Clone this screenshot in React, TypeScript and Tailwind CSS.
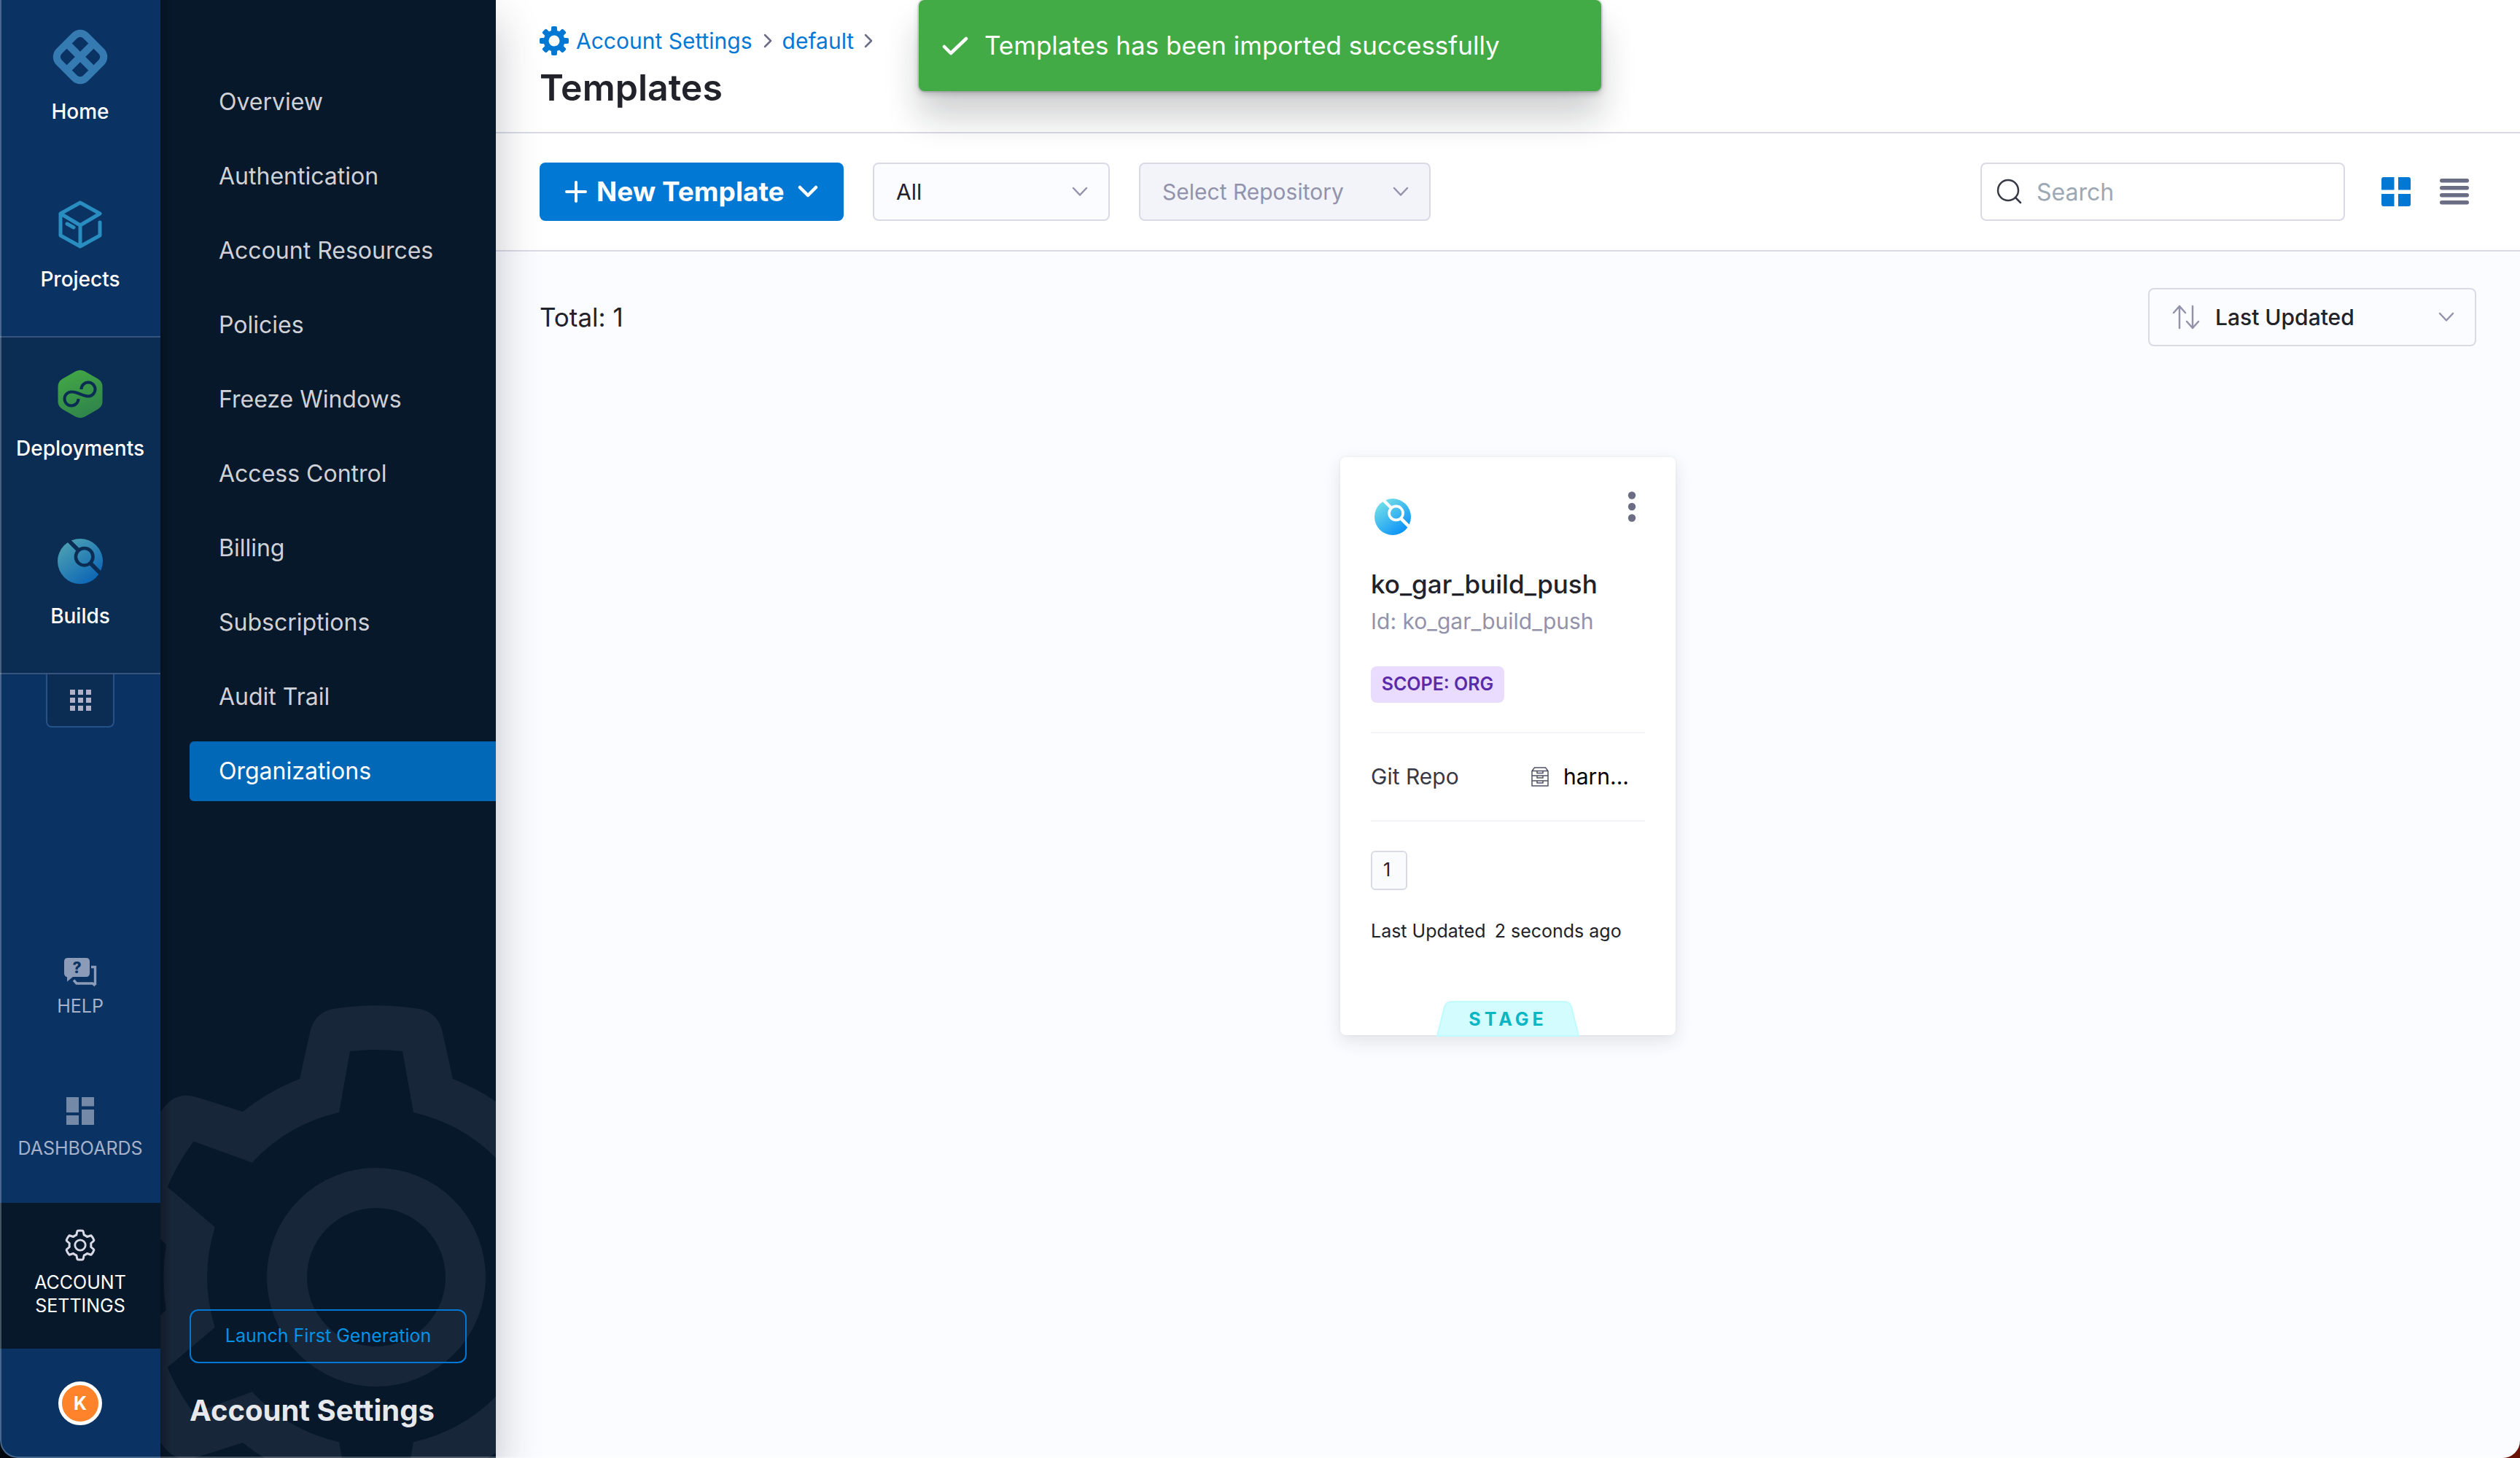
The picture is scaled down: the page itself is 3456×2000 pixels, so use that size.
import { useId } from "react";
import type { ReactNode } from "react";

type Pt = [number, number];

const rotate = ([x, y]: Pt, deg: number): Pt => {
  const a = (deg * Math.PI) / 180;
  return [x * Math.cos(a) - y * Math.sin(a), x * Math.sin(a) + y * Math.cos(a)];
};
const fmt = ([x, y]: Pt) => `${x.toFixed(1)} ${y.toFixed(1)}`;

/** Closed outline of a six-toothed gear, centred on the origin. */
function gearOutline(base: Pt, tip: Pt, round: number): string {
  const bodyR = Math.hypot(base[0], base[1]);
  const tipR = Math.hypot(tip[0], tip[1]);
  let d = "";
  for (let k = 0; k < 6; k++) {
    const r = (p: Pt) => fmt(rotate(p, k * 60));
    const [bx, by] = base;
    const [tx, ty] = tip;
    const sx = tx + (bx - tx) * round * 0.4;
    const sy = ty + (by - ty) * round * 0.4;
    const inner = tx * (1 - round * 0.4);
    const innerY = -Math.sqrt(tipR * tipR - inner * inner);
    d += k === 0 ? `M${r([-bx, by])}` : `A${bodyR} ${bodyR} 0 0 1 ${r([-bx, by])}`;
    d += `L${r([-sx, sy])}Q${r([-tx, ty])} ${r([-inner, innerY])}`;
    d += `A${tipR} ${tipR} 0 0 1 ${r([inner, innerY])}`;
    d += `Q${r([tx, ty])} ${r([sx, sy])}L${r([bx, by])}`;
  }
  return d + `A${bodyR} ${bodyR} 0 0 1 ${fmt([-base[0], base[1]])}Z`;
}

function BigGear() {
  const d = gearOutline([105, -272], [85, -363], 0.75) + gearOutline([51, -226], [36, -310], 0);
  return (
    <svg aria-hidden="true" viewBox="-380 -380 760 760" className="pointer-events-none absolute -bottom-[132px] -left-[84px] h-[760px] w-[760px] max-w-none">
      <path d={d} fill="#182639" fillRule="evenodd" />
      <circle r="122.5" fill="none" stroke="#182639" strokeWidth="55" />
    </svg>
  );
}

function SettingsGear() {
  return (
    <svg viewBox="-22 -22 44 44" className="h-11 w-11">
      <path d={gearOutline([5.2, -14], [4, -19.6], 0.4)} fill="none" stroke="#d9dae5" strokeWidth="3" strokeLinejoin="round" />
      <circle r="7.2" fill="none" stroke="#d9dae5" strokeWidth="2.8" />
    </svg>
  );
}

function Cog() {
  return (
    <svg viewBox="-20 -20 40 40" className="h-10 w-10" fill="#0278d5">
      {[0, 45, 90, 135].map((a) => (
        <rect key={a} x="-4" y="-20" width="8" height="40" rx="2" transform={`rotate(${a})`} />
      ))}
      <circle r="14.5" />
      <circle r="7.5" fill="#fff" />
    </svg>
  );
}

function HomeLogo() {
  return (
    <svg viewBox="-40 -40 80 80" className="h-20 w-20" fill="none" stroke="#357bb1" strokeWidth="10">
      <g transform="rotate(45)">
        <rect x="-26" y="-26" width="52" height="52" rx="11" />
        <path d="M0-26V26M-26 0H26" />
      </g>
    </svg>
  );
}

function Cube() {
  return (
    <svg viewBox="0 0 60 66" className="h-[66px] w-[60px]" fill="none" stroke="#2a8dbf" strokeWidth="5" strokeLinejoin="round" strokeLinecap="round">
      <path d="M57 30V48L30 63 3 48V18L30 3 57 18 30 34V63M3 18 30 34M12 32 21 37" />
    </svg>
  );
}

function DeploymentsIcon() {
  const id = useId();
  return (
    <svg viewBox="20 17 62 67" className="h-[67px] w-[62px]">
      <linearGradient id={id} x1="0.3" y1="0" x2="0.7" y2="1">
        <stop offset="0" stopColor="#42a646" />
        <stop offset="1" stopColor="#2f834b" />
      </linearGradient>
      <path d="M44.500 19.500Q51 16 57.500 19.500L75 29.500Q81.500 33.500 81.500 40V61Q81.500 67.500 75 71.500L57.500 81.500Q51 85 44.500 81.500L27 71.500Q20.500 67.500 20.500 61V40Q20.500 33.500 27 29.500Z" fill={`url(#${id})`} />
      <path d="M52.500 44A9.500 9.500 0 1 1 62 53.500C54 53.500 48 47.500 39.500 47.500A9.500 9.500 0 1 0 48.500 57" fill="none" stroke="#0b2c53" strokeWidth="4" />
    </svg>
  );
}

function BuildsIcon({ className, from, to, line }: { className: string; from: string; to: string; line: string }) {
  const id = useId();
  return (
    <svg viewBox="-24.500 -24.500 49 49" className={className}>
      <linearGradient id={id} x1="0.15" y1="0.1" x2="0.75" y2="0.9">
        <stop offset="0" stopColor={from} />
        <stop offset="1" stopColor={to} />
      </linearGradient>
      <circle r="24.500" fill={`url(#${id})`} />
      <g fill="none" stroke={line} strokeWidth="3.600">
        <circle cx="4.500" cy="-5" r="9.300" />
        <path d="M-2-12-14-24M11 2 24 15" strokeWidth="4.400" />
      </g>
    </svg>
  );
}

function HelpIcon() {
  return (
    <svg viewBox="0 0 46 42" className="h-[42px] w-[46px]">
      <path d="M6 1H31Q36 1 36 6V22Q36 27 31 27H13L5 33.500V27.500Q1 26 1 22V6Q1 1 6 1Z" fill="#8b9bb8" />
      <path d="M38 13.500H43.500V38M43.500 39 40 36H18L14 31.500" fill="none" stroke="#8b9bb8" strokeWidth="3.400" />
      <text x="18.500" y="21.500" textAnchor="middle" fontSize="21" fontWeight="800" fontFamily="Inter, sans-serif" fill="#0a3364">?</text>
    </svg>
  );
}

function DashboardsIcon() {
  return (
    <svg viewBox="0 0 38 38" className="h-[38px] w-[38px]" fill="#7489a8">
      <path d="M0 0H17V21H0ZM21 0H38V12.500H21ZM0 25H17V38H0ZM21 17H38V38H21Z" />
    </svg>
  );
}

function Chevron({ className = "", stroke = "#9293ab", width = 2.5 }: { className?: string; stroke?: string; width?: number }) {
  return (
    <svg viewBox="0 0 22 14" className={`pointer-events-none h-[14px] w-[22px] ${className}`} fill="none" stroke={stroke} strokeWidth={width} strokeLinecap="round" strokeLinejoin="round">
      <path d="M2 2 11 11.500 20 2" />
    </svg>
  );
}

function CrumbChevron() {
  return (
    <svg viewBox="0 0 12 20" className="h-5 w-3" fill="none" stroke="#6b6d85" strokeWidth="2.500" strokeLinecap="round" strokeLinejoin="round">
      <path d="M2 2 10 10 2 18" />
    </svg>
  );
}

function RepoIcon() {
  return (
    <svg viewBox="0 0 24 27" className="h-[27px] w-6" fill="none" stroke="#4f5162" strokeWidth="1.500">
      <path d="M1 5.500V26H23V5.500L19.500 1H4.500ZM1 5.500H23M1 12H23M1 19H23M8 6V8.500H16V6M8 12.500V15H16V12.500M8 19.500V22H16V19.500" />
    </svg>
  );
}

function RailItem({ label, children }: { label: string; children: ReactNode }) {
  return (
    <a href="#" className="flex h-[230px] flex-col items-center pt-[37px]">
      <span className="flex h-20 items-center">{children}</span>
      <span className="mt-[17px] text-[28px] leading-9 font-medium text-white">{label}</span>
    </a>
  );
}

const menu = ["Overview", "Authentication", "Account Resources", "Policies", "Freeze Windows", "Access Control", "Billing", "Subscriptions", "Audit Trail", "Organizations"];

function Rail() {
  return (
    <nav aria-label="Modules" className="relative z-20 flex w-[220px] shrink-0 flex-col bg-[#0a3364]">
      <div className="border-b-2 border-[#36547d] pt-px">
        <RailItem label="Home"><HomeLogo /></RailItem>
        <RailItem label="Projects"><Cube /></RailItem>
      </div>
      <div className="border-b-2 border-[#36547d] bg-[#0b2c53]">
        <RailItem label="Deployments"><DeploymentsIcon /></RailItem>
        <RailItem label="Builds">
          <BuildsIcon className="h-[62px] w-[62px]" from="#4a9fb2" to="#1069b6" line="#0b2c53" />
        </RailItem>
      </div>
      <button type="button" aria-label="All modules" className="mx-auto flex h-[73px] w-[94px] items-center justify-center rounded-b-lg border-2 border-t-0 border-[#26528a] bg-[#0b2c53]">
        <span className="grid grid-cols-3 gap-1">
          {Array.from({ length: 9 }, (_, i) => (
            <span key={i} className="h-[7px] w-[7px] bg-[#b0b1c9]" />
          ))}
        </span>
      </button>
      <div className="mt-auto flex flex-col text-center text-[25px] leading-8 text-[#a5b2c9]">
        <a href="#" className="flex h-[196px] flex-col items-center pt-[55px]">
          <HelpIcon />
          <span className="mt-[9px]">HELP</span>
        </a>
        <a href="#" className="flex h-[196px] flex-col items-center pt-[51px]">
          <DashboardsIcon />
          <span className="mt-4">DASHBOARDS</span>
        </a>
        <a href="#" aria-current="page" className="flex h-[200px] flex-col items-center bg-[#07182b] pt-9 text-white">
          <SettingsGear />
          <span className="mt-[13px]">ACCOUNT<br />SETTINGS</span>
        </a>
        <div className="flex h-[150px] items-center justify-center">
          <button type="button" aria-label="User profile" className="h-[60px] w-[60px] rounded-full border-[5px] border-white bg-[#ff832b] text-[25px] font-bold text-white">K</button>
        </div>
      </div>
    </nav>
  );
}

function Sidebar() {
  return (
    <aside className="relative z-10 flex w-[460px] shrink-0 flex-col bg-[#07182b] shadow-[0_30px_56px_rgba(40,41,61,0.28)]">
      <div className="absolute inset-0 overflow-hidden">
        <BigGear />
        <div className="absolute inset-y-0 left-0 w-4 bg-linear-to-r from-black/25 to-transparent" />
      </div>
      <nav aria-label="Account settings" className="relative flex flex-col gap-5 pt-[99px] pl-10">
        {menu.map((m) => (
          <a
            key={m}
            href="#"
            aria-current={m === "Organizations" ? "page" : undefined}
            className={m === "Organizations" ? "flex h-[82px] items-center rounded-l-md bg-[#0168b7] pl-10 text-[32px] text-white" : "flex h-[82px] items-center pl-10 text-[32px] text-[#cfd1d6]"}
          >
            {m}
          </a>
        ))}
      </nav>
      <div className="relative mt-auto px-10 pb-10">
        <button type="button" className="h-[74px] w-full rounded-xl border-2 border-[#0278d5] text-[25px] text-[#0092e4]">Launch First Generation</button>
        <h2 className="mt-10 text-[40px] leading-[50px] font-bold text-[#e6e8ec]">Account Settings</h2>
      </div>
    </aside>
  );
}

function Toolbar() {
  return (
    <div className="flex items-center border-b-2 border-[#d9dae6] bg-white py-10 pr-[70px] pl-[60px]">
      <button type="button" className="flex h-20 w-[417px] items-center rounded-lg bg-[#0278d5] pl-[34px] text-[37px] font-bold text-white">
        <svg viewBox="0 0 32 32" className="h-8 w-8" stroke="#fff" strokeWidth="4" strokeLinecap="round">
          <path d="M16 3V29M3 16H29" />
        </svg>
        <span className="ml-3">New Template</span>
        <svg viewBox="0 0 28 18" className="ml-[18px] h-[18px] w-7" fill="none" stroke="#fff" strokeWidth="4.500" strokeLinecap="round" strokeLinejoin="round">
          <path d="M3 3 14 14 25 3" />
        </svg>
      </button>
      <div className="relative ml-10">
        <select aria-label="Template type" className="h-20 w-[325px] appearance-none rounded-lg border-2 border-[#d9dae6] bg-[#fbfcff] pl-[30px] text-[30px] text-[#22222a]">
          <option>All</option>
        </select>
        <Chevron className="absolute top-[33px] right-[30px]" />
      </div>
      <div className="relative ml-10">
        <select aria-label="Repository" disabled className="h-20 w-[400px] appearance-none rounded-lg border-2 border-[#d9dae6] bg-[#f3f3fa] pl-[30px] text-[30px] text-[#9293ab] opacity-100">
          <option>Select Repository</option>
        </select>
        <Chevron className="absolute top-[33px] right-[30px]" />
      </div>
      <div className="relative ml-auto">
        <svg viewBox="0 0 36 36" className="pointer-events-none absolute top-[22px] left-[21px] h-9 w-9" fill="none" stroke="#383946" strokeWidth="2.500" strokeLinecap="round">
          <circle cx="17" cy="16" r="14" />
          <path d="M27 26 34 33" />
        </svg>
        <input type="search" aria-label="Search" placeholder="Search" className="h-20 w-[500px] rounded-lg border-2 border-[#d9dae6] bg-white pl-[75px] text-[32px] placeholder:text-[#9ca8b3]" />
      </div>
      <button type="button" aria-label="Grid view" className="ml-[50px]">
        <svg viewBox="0 0 40 40" className="h-10 w-10" fill="#0278d5">
          <path d="M3 0H17.500V17.500H0V3Q0 0 3 0ZM23 0H37Q40 0 40 3V17.500H23ZM0 23H17.500V40H3Q0 40 0 37ZM23 23H40V37Q40 40 37 40H23Z" />
        </svg>
      </button>
      <button type="button" aria-label="List view" className="ml-10">
        <svg viewBox="0 0 40 40" className="h-10 w-10" fill="#6b6d85">
          {[2, 12, 22, 32].map((y) => (
            <rect key={y} y={y} width="40" height="5.500" rx="2.700" />
          ))}
        </svg>
      </button>
    </div>
  );
}

function TemplateCard() {
  return (
    <article className="mx-auto mt-[152px] flex w-[460px] flex-col rounded-lg bg-white px-[42px] pt-[47px] shadow-[0_8px_24px_rgba(40,41,61,0.12),0_0_4px_rgba(40,41,61,0.06)]">
      <div className="flex h-[60px] items-start justify-between pr-3">
        <BuildsIcon className="mt-[10px] ml-[5px] h-[50px] w-[50px]" from="#73dfe7" to="#0f95f8" line="#fff" />
        <button type="button" aria-label="Template options">
          <svg viewBox="0 0 12 42" className="h-[42px] w-3" fill="#6b6d85">
            <circle cx="6" cy="5.500" r="5.200" />
            <circle cx="6" cy="21" r="5.200" />
            <circle cx="6" cy="36.500" r="5.200" />
          </svg>
        </button>
      </div>
      <h3 className="mt-[42px] text-[35px] leading-[50px] font-medium text-[#22222a]">ko_gar_build_push</h3>
      <p className="mt-[5px] text-[30px] leading-[42px] text-[#9293ab]">Id: ko_gar_build_push</p>
      <span className="mt-[41px] flex h-[50px] w-[183px] items-center justify-center rounded-lg bg-[#e9dcff] text-[25px] font-semibold text-[#592baa]">SCOPE: ORG</span>
      <div className="mt-10 flex h-[123px] items-center border-y-2 border-[#f3f3fa] text-[30px]">
        <span className="text-[#383946]">Git Repo</span>
        <span className="ml-auto flex items-center gap-5 pr-[22px] text-black">
          <RepoIcon />
          harn...
        </span>
      </div>
      <span className="mt-10 flex h-[54px] w-[50px] items-center rounded-md border-2 border-[#d9dae6] bg-[#fafbfc] pl-[15px] text-[25px] text-[#22222a]">1</span>
      <p className="mt-10 flex gap-3 text-[25px] leading-8 text-[#22222a]">
        <span>Last Updated</span>
        <span>2 seconds ago</span>
      </p>
      <div className="relative mx-auto mt-20 flex h-[47px] w-[196px] items-center justify-center pt-1">
        <svg aria-hidden="true" viewBox="0 0 196 49" className="absolute inset-0 h-[49px] w-[196px]">
          <path d="M1 48 11 8Q13 1 21 1H175Q183 1 185 8L195 48Z" fill="#d3fcfe" stroke="#c0fbfe" strokeWidth="2" />
        </svg>
        <span className="relative text-[25px] font-bold tracking-[0.2em] text-[#0bb6c4]">STAGE</span>
      </div>
    </article>
  );
}

function Toast() {
  return (
    <div role="status" className="absolute top-0 left-1/2 z-20 flex h-[125px] w-[936px] -translate-x-1/2 items-center gap-[22px] rounded-lg bg-[#42ab45] pl-8 text-[35px] text-white shadow-[0_0_0_2px_rgba(16,22,26,0.1),0_4px_8px_rgba(16,22,26,0.2),0_36px_48px_rgba(16,22,26,0.2)]">
      <svg viewBox="0 0 36 26" className="h-[26px] w-9" fill="none" stroke="#fff" strokeWidth="4.500" strokeLinecap="round" strokeLinejoin="round">
        <path d="M3 14 12 23 33 3" />
      </svg>
      Templates has been imported successfully
    </div>
  );
}

export default function App() {
  return (
    <div className="bg-linear-to-r from-[#02060d] from-50% to-[#6b1206] to-50% font-['Inter',sans-serif]">
      <div className="relative flex min-h-screen overflow-hidden rounded-b-[24px]">
        <Rail />
        <Sidebar />
        <main className="flex min-w-0 flex-1 flex-col bg-[#fbfcff]">
          <header className="flex flex-col border-b-2 border-[#d9dae6] bg-white px-[60px] pt-9 pb-[31px]">
            <nav aria-label="Breadcrumb" className="flex h-10 items-center text-[30px] text-[#0278d5]">
              <Cog />
              <a href="#" className="mr-[15px] ml-[10px]">Account Settings</a>
              <CrumbChevron />
              <a href="#" className="mx-[14px]">default</a>
              <CrumbChevron />
            </nav>
            <h1 className="mt-[14px] text-[50px] leading-[60px] font-semibold text-[#22222a]">Templates</h1>
          </header>
          <Toolbar />
          <section className="px-[60px] pt-[50px]">
            <div className="flex items-center justify-between">
              <p className="text-[35px] text-[#22222a]">Total: 1</p>
              <div className="relative">
                <svg viewBox="0 0 38 34" className="pointer-events-none absolute top-[23px] left-[33px] h-[34px] w-[38px]" fill="none" stroke="#9293ab" strokeWidth="2.500" strokeLinecap="round" strokeLinejoin="round">
                  <path d="M10 32V2M2 11 10 2 18 11M28 2V32M20 23 28 32 36 23" />
                </svg>
                <select aria-label="Sort by" className="h-20 w-[450px] appearance-none rounded-lg border-2 border-[#d9dae6] bg-[#fbfcff] pl-[90px] text-[30px] font-medium text-[#22222a]">
                  <option>Last Updated</option>
                </select>
                <Chevron className="absolute top-[33px] right-[30px]" />
              </div>
            </div>
            <TemplateCard />
          </section>
        </main>
        <Toast />
        <div className="pointer-events-none absolute inset-0 z-30 rounded-b-[24px] border-b-2 border-l-2 border-white/25" />
      </div>
    </div>
  );
}
